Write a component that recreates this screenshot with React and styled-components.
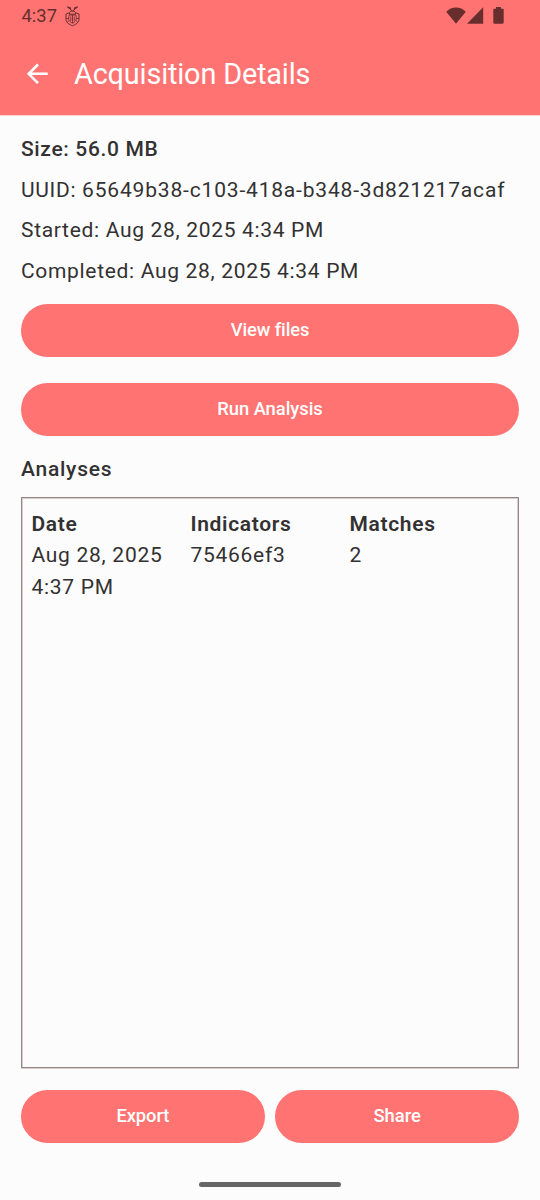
import React from "react";
import styled, { createGlobalStyle } from "styled-components";

const coral = "#ff7472";
const ink = "#333131";
const statusInk = "#682e2e";

const GlobalStyle = createGlobalStyle`
  *, *::before, *::after { box-sizing: border-box; }
  html, body { margin: 0; padding: 0; background: #fcfcfc; }
  body { font-family: Roboto, "Liberation Sans", sans-serif; color: ${ink}; }
`;

const Screen = styled.div`
  width: 540px;
  height: 1200px;
  display: flex;
  flex-direction: column;
  background: #fcfcfc;
  overflow: hidden;
`;

const Header = styled.header`
  flex: none;
  height: 115px;
  background: ${coral};
  box-shadow: 0 1px #fdd2d1;
`;

const StatusBar = styled.div`
  display: flex;
  align-items: center;
  height: 32px;
  padding: 0 36.5px 0 21.5px;
  color: ${statusInk};
`;

const Clock = styled.span`
  font-size: 18.4px;
  line-height: 32px;
  margin-right: 8px;
`;

const StatusIcons = styled.div`
  display: flex;
  align-items: center;
  height: 17px;
  margin: 0 0 2px auto;
`;

const TitleBar = styled.div`
  display: flex;
  align-items: center;
  height: 83px;
  padding-left: 26px;
  color: #fff;
`;

const Title = styled.h1`
  margin: 0 0 0 26px;
  padding-top: 1px;
  font-size: 28.875px;
  font-weight: 400;
  line-height: 37px;
  letter-spacing: -0.17px;
`;

const Content = styled.main`
  flex: 1;
  min-height: 0;
  display: flex;
  flex-direction: column;
  padding: 14px 21px 39.5px;
`;

const Detail = styled.p`
  margin: 0;
  height: 40.5px;
  font-size: 21px;
  line-height: 40.5px;
  letter-spacing: ${(p) => (p.$strong ? "0.65px" : "0.68px")};
  white-space: nowrap;
  font-weight: ${(p) => (p.$strong ? 500 : 400)};
`;

const Identifier = styled.span`
  letter-spacing: 0.82px;
`;

const Button = styled.button`
  flex: ${(p) => (p.$grow ? "1" : "none")};
  height: 52.5px;
  margin: 0;
  padding: 0;
  border: 0;
  border-radius: 27px;
  background: ${coral};
  color: #fff;
  font: 500 18.375px/26px Roboto, "Liberation Sans", sans-serif;
  letter-spacing: ${(p) => (p.$tight ? "-0.1px" : "-0.03px")};
`;

const Actions = styled.div`
  display: flex;
  flex-direction: column;
  gap: 26.5px;
  padding-top: 13px;
`;

const SectionTitle = styled.h2`
  margin: 17.8px 0 11.9px;
  font-size: 21px;
  font-weight: 500;
  line-height: 32px;
  letter-spacing: 0.75px;
`;

const Table = styled.div`
  flex: 1;
  display: grid;
  grid-template-columns: repeat(3, 1fr);
  grid-auto-rows: max-content;
  padding: 10.5px 9.5px 9.5px;
  border: 1px solid #968787;
  box-shadow: inset 1px 1px #d5cecd, inset -1px 0 #d5cecd, 0 1px #d5cecd;
`;

const Cell = styled.div`
  font-size: 21px;
  line-height: 31.5px;
  letter-spacing: ${(p) => (p.$head ? "0.66px" : "0.72px")};
  font-weight: ${(p) => (p.$head ? 600 : 400)};
`;

const Footer = styled.div`
  display: flex;
  gap: 10.5px;
  margin-top: 22px;
`;

const NavHandle = styled.div`
  flex: none;
  align-self: center;
  width: 142px;
  height: 5px;
  margin-bottom: 13px;
  border-radius: 3px;
  background: #666;
`;

const BeetleIcon = () => (
  <svg width="15" height="21" viewBox="0 0 15 21" fill="none" stroke="currentColor" strokeWidth="1">
    <path d="M7 5.5 5.2 2.6 2.4 1.2M8 5.5 9.8 2.6 12.6 1.2" />
    <path d="M2.6 1 5.4 1.6 5.6 3.2ZM12.4 1 9.6 1.6 9.4 3.2Z" fill="currentColor" />
    <path d="M4.5 8.2V6.5L6.2 5h2.6l1.7 1.5v1.7z" />
    <path d="M4.3 6.8 1 8v5.6c0 3 3.5 5 6.5 6.2 3-1.2 6.5-3.2 6.5-6.2V8l-3.3-1.2" />
    <path d="M4.3 9c-1.2 3-.8 6.4 3.2 8.2 4-1.8 4.4-5.2 3.2-8.2zM7.5 9v8M5.8 10.5v4.2M9.2 10.5v4.2M1 12.5h2.7M11.3 12.5H14M4 14.5l-1.8 1.7M11 14.5l1.8 1.7" strokeWidth="0.85" />
  </svg>
);

const WifiIcon = () => (
  <svg width="20" height="17" viewBox="0 0 20 17" fill="currentColor">
    <path d="M10 16.7 0.2 4.7C2.8 2 6.2.5 10 .5s7.2 1.5 9.8 4.2z" />
  </svg>
);

const SignalIcon = () => (
  <svg width="17" height="17" viewBox="0 0 17 17" fill="currentColor">
    <path d="M16.2.3v16.4H0z" />
  </svg>
);

const BatteryIcon = () => (
  <svg width="11" height="17" viewBox="0 0 11 17" fill="currentColor">
    <path d="M3 0h5v1.7h1.6c.6 0 1.1.5 1.1 1.1v12.8c0 .6-.5 1.1-1.1 1.1H1.4c-.6 0-1.1-.5-1.1-1.1V2.8c0-.6.5-1.1 1.1-1.1H3z" />
  </svg>
);

const BatterySlot = styled.span`
  display: flex;
  margin-left: 8.5px;
`;

const SignalSlot = styled.span`
  display: flex;
  margin-left: 1.5px;
`;

const BackIcon = () => (
  <svg width="22" height="22" viewBox="0 0 22 22" fill="none" stroke="#fff" strokeWidth="2.6">
    <path d="M21.7 10.8H2.6M12 1.5 2.7 10.8l9.3 9.3" />
  </svg>
);

const columns = ["Date", "Indicators", "Matches"];
const analyses = [["Aug 28, 2025 4:37 PM", "75466ef3", "2"]];

export default function App() {
  return (
    <Screen>
      <GlobalStyle />
      <Header>
        <StatusBar>
          <Clock>4:37</Clock>
          <BeetleIcon />
          <StatusIcons>
            <WifiIcon />
            <SignalSlot><SignalIcon /></SignalSlot>
            <BatterySlot><BatteryIcon /></BatterySlot>
          </StatusIcons>
        </StatusBar>
        <TitleBar>
          <BackIcon />
          <Title>Acquisition Details</Title>
        </TitleBar>
      </Header>
      <Content>
        <Detail $strong>Size: 56.0 MB</Detail>
        <Detail>UUID: <Identifier>65649b38-c103-418a-b348-3d821217acaf</Identifier></Detail>
        <Detail>Started: Aug 28, 2025 4:34 PM</Detail>
        <Detail>Completed: Aug 28, 2025 4:34 PM</Detail>
        <Actions>
          <Button $tight>View files</Button>
          <Button>Run Analysis</Button>
        </Actions>
        <SectionTitle>Analyses</SectionTitle>
        <Table>
          {columns.map((name) => <Cell key={name} $head>{name}</Cell>)}
          {analyses.flat().map((value) => <Cell key={value}>{value}</Cell>)}
        </Table>
        <Footer>
          <Button $grow $tight>Export</Button>
          <Button $grow>Share</Button>
        </Footer>
      </Content>
      <NavHandle />
    </Screen>
  );
}
